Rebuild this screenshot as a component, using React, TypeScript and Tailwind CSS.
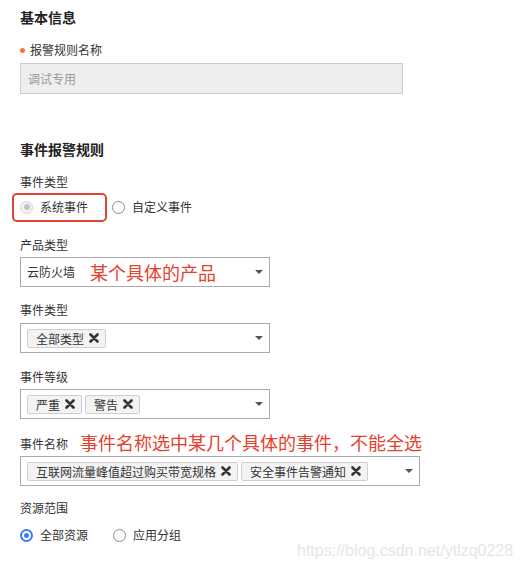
import React from "react";

const FONT = { fontFamily: '"Noto Sans CJK SC", "Noto Sans", sans-serif' };

function XMark() {
  return (
    <svg width="10" height="10" viewBox="0 0 10 10" className="shrink-0">
      <path d="M1.5 1.5 L8.5 8.5 M8.5 1.5 L1.5 8.5" stroke="#333" strokeWidth="2.6" strokeLinecap="round" />
    </svg>
  );
}

function Arrow() {
  return (
    <svg width="8" height="4" viewBox="0 0 8 4" className="shrink-0">
      <path d="M0 0 L8 0 L4 4 Z" fill="#555" />
    </svg>
  );
}

function Tag({ text }: { text: string }) {
  return (
    <div className="flex items-center h-[19px] pl-[8px] pr-[6px] gap-[5px] border border-[#cfcfcf] bg-[#f3f3f3] rounded-[2px] text-[12px] leading-[17px] text-[#333]">
      <span>{text}</span>
      <XMark />
    </div>
  );
}

function Label({ children, className = "" }: { children: React.ReactNode; className?: string }) {
  return <div className={`h-[16px] text-[12px] leading-[16px] text-[#333] ${className}`}>{children}</div>;
}

function Select({ children, width, className = "" }: { children: React.ReactNode; width: string; className?: string }) {
  return (
    <div className={`flex items-center h-[30px] ${width} border border-[#aaa] bg-white pl-[6px] pr-[6px] ${className}`}>
      <div className="flex-1 flex items-center gap-[3px] min-w-0">{children}</div>
      <Arrow />
    </div>
  );
}

function Radio({ kind }: { kind: "disabled" | "off" | "on" }) {
  if (kind === "on") {
    return (
      <div className="w-[13px] h-[13px] rounded-full border-2 border-[#3b7cf5] bg-white flex items-center justify-center shrink-0">
        <div className="w-[5px] h-[5px] rounded-full bg-[#3b7cf5]" />
      </div>
    );
  }
  if (kind === "disabled") {
    return (
      <div className="w-[13px] h-[13px] rounded-full border border-[#d4d4d4] bg-[#f2f2f2] flex items-center justify-center shrink-0">
        <div className="w-[6px] h-[6px] rounded-full bg-[#c4c4c4]" />
      </div>
    );
  }
  return <div className="w-[13px] h-[13px] rounded-full border border-[#8a8a8a] bg-white shrink-0" />;
}

export default function App() {
  return (
    <div className="relative w-[520px] h-[571px] bg-white overflow-hidden" style={FONT}>
      <div className="flex flex-col pl-[20px]">
        <div className="mt-[7px] h-[20px] text-[14px] leading-[20px] font-bold text-[#222]">基本信息</div>

        <div className="mt-[15px] h-[16px] flex items-center text-[12px] leading-[16px] text-[#333]">
          <span className="w-[5px] h-[5px] rounded-full bg-[#ef7a2f] mr-[5px]" />
          <span>报警规则名称</span>
        </div>

        <div className="mt-[5px] w-[383px] h-[31px] border border-[#cccccc] bg-[#eeeeee] flex items-center pl-[7px] text-[12px] text-[#9a9a9a]">
          调试专用
        </div>

        <div className="mt-[45px] h-[20px] text-[14px] leading-[20px] font-bold text-[#222]">事件报警规则</div>

        <Label className="mt-[15px]">事件类型</Label>

        <div className="mt-[2px] ml-[-8px] h-[30px] flex items-center text-[12px] text-[#333]">
          <div className="h-[29px] w-[95px] border-2 border-[#e0442f] rounded-[5px] flex items-center pl-[6px] gap-[7px]">
            <Radio kind="disabled" />
            <span>系统事件</span>
          </div>
          <div className="ml-[5px] flex items-center gap-[7px]">
            <Radio kind="off" />
            <span>自定义事件</span>
          </div>
        </div>

        <Label className="mt-[15px]">产品类型</Label>
        <Select width="w-[250px]" className="mt-[4px]">
          <span className="text-[12px] text-[#333]">云防火墙</span>
          <span className="ml-[12px] text-[18px] leading-[20px] text-[#e5412d]">某个具体的产品</span>
        </Select>

        <Label className="mt-[15px]">事件类型</Label>
        <Select width="w-[250px]" className="mt-[5px]">
          <Tag text="全部类型" />
        </Select>

        <Label className="mt-[16px]">事件等级</Label>
        <Select width="w-[250px]" className="mt-[4px]">
          <Tag text="严重" />
          <Tag text="警告" />
        </Select>

        <div className="mt-[12px] h-[22px] flex items-center">
          <span className="text-[12px] leading-[16px] text-[#333] mt-[4px]">事件名称</span>
          <span className="ml-[12px] text-[18px] leading-[22px] text-[#e5412d]">事件名称选中某几个具体的事件，不能全选</span>
        </div>
        <Select width="w-[400px]" className="mt-[3px]">
          <Tag text="互联网流量峰值超过购买带宽规格" />
          <Tag text="安全事件告警通知" />
        </Select>

        <Label className="mt-[14px]">资源范围</Label>

        <div className="mt-[9px] h-[20px] flex items-center text-[12px] text-[#333]">
          <div className="flex items-center gap-[7px]">
            <Radio kind="on" />
            <span>全部资源</span>
          </div>
          <div className="ml-[25px] flex items-center gap-[7px]">
            <Radio kind="off" />
            <span>应用分组</span>
          </div>
        </div>
      </div>

      <div
        className="absolute left-[297px] top-[541px] text-[16px] leading-[20px] text-[#e6e6e6]"
        style={{ fontFamily: '"Liberation Sans", Arial, sans-serif' }}
      >
        https://blog.csdn.net/ytlzq0228
      </div>
    </div>
  );
}
